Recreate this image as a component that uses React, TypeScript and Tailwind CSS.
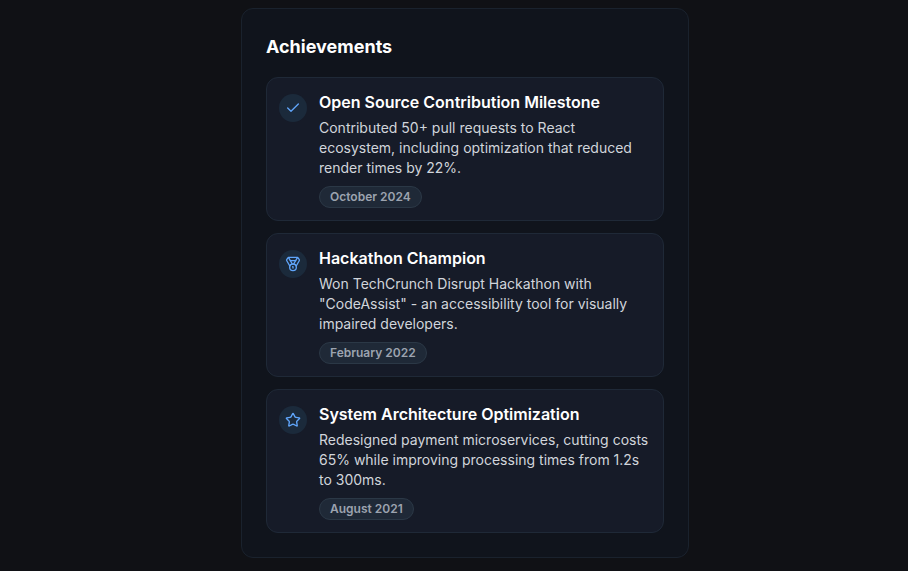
import { Check, Medal, Star, type LucideIcon } from 'lucide-react';

interface Achievement {
  title: string;
  description: string;
  date: string;
  icon: LucideIcon;
}

const achievements: Achievement[] = [
  {
    title: 'Open Source Contribution Milestone',
    description:
      'Contributed 50+ pull requests to React ecosystem, including optimization that reduced render times by 22%.',
    date: 'October 2024',
    icon: Check,
  },
  {
    title: 'Hackathon Champion',
    description:
      'Won TechCrunch Disrupt Hackathon with "CodeAssist" - an accessibility tool for visually impaired developers.',
    date: 'February 2022',
    icon: Medal,
  },
  {
    title: 'System Architecture Optimization',
    description:
      'Redesigned payment microservices, cutting costs 65% while improving processing times from 1.2s to 300ms.',
    date: 'August 2021',
    icon: Star,
  },
];

function AchievementItem({ title, description, date, icon: Icon }: Achievement) {
  return (
    <li className="flex items-start gap-3 rounded-xl border border-[#1f2937] bg-[#161b28] p-3">
      <div className="mt-1 flex size-7 shrink-0 items-center justify-center rounded-full bg-[#1b2a3b] text-[#60a5fa]">
        <Icon className="size-4" strokeWidth={2} aria-hidden="true" />
      </div>
      <div className="min-w-0 flex-1">
        <h3 className="text-base font-semibold text-white">{title}</h3>
        <p className="mt-1 text-sm text-[#d1d5db]">{description}</p>
        <span className="mt-2 flex w-fit rounded-full border border-[#2b3846] bg-[#1f2937] px-2.5 py-0.5 text-xs font-semibold text-[#9ca3af]">
          {date}
        </span>
      </div>
    </li>
  );
}

export default function App() {
  return (
    <main className="flex min-h-screen items-start justify-center bg-[#101115] pt-2 pl-[22px] font-['Inter',sans-serif]">
      <section className="w-full max-w-md rounded-xl border border-[#1a222d] bg-[#10141c] p-6">
        <h2 className="mb-4 text-lg font-bold text-white">Achievements</h2>
        <ul className="flex flex-col gap-3">
          {achievements.map((item) => (
            <AchievementItem key={item.title} {...item} />
          ))}
        </ul>
      </section>
    </main>
  );
}
